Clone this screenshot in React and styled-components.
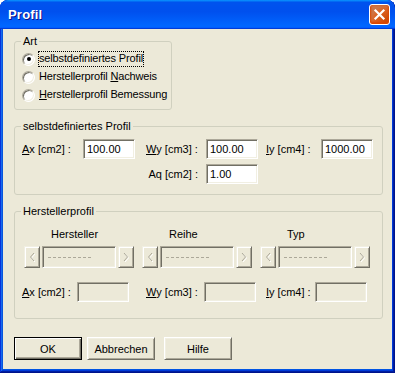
import React from 'react';
import styled, { createGlobalStyle, css } from 'styled-components';

const Global = createGlobalStyle`
  html, body { margin: 0; padding: 0; background: #ffffff; }
  body { font-family: "Liberation Sans", Arial, sans-serif; font-size: 11px; color: #000; }
`;

const Window = styled.div`
  width: 395px;
  height: 373px;
  box-sizing: border-box;
  display: flex;
  flex-direction: column;
  background: #0054e3;
  border-radius: 8px 8px 0 0;
  padding: 0 3px 4px;
  overflow: hidden;
  box-shadow: inset -1px -1px #00138c, inset 1px 1px #0831d9, inset -2px -2px #001ea0,
    inset 2px 2px #166aee, inset -3px -3px #003bda, inset 3px 3px #0855dd;
`;

const TitleBar = styled.div`
  height: 29px;
  margin: 0 -3px;
  flex: none;
  display: flex;
  align-items: center;
  justify-content: space-between;
  padding: 0 5px 0 8px;
  box-sizing: border-box;
  border-radius: 8px 8px 0 0;
  background: linear-gradient(180deg, #0997ff, #0053ee 8%, #0050ee 40%, #0066ff 88%, #0066ff 93%, #005bff 95%, #003dd7 96%, #003dd7);
`;

const Title = styled.span`
  color: #fff;
  font-family: "Liberation Sans", Arial, sans-serif;
  font-weight: bold;
  font-size: 13px;
  text-shadow: 1px 1px #0f1089;
  letter-spacing: 0.2px;
`;

const CloseButton = styled.div`
  width: 21px;
  height: 21px;
  box-sizing: border-box;
  border: 1px solid #fff;
  border-radius: 3px;
  background: radial-gradient(circle at 90% 90%, #cc4600 0%, #dc6527 55%, #cd7546 70%), #d5562a;
  display: flex;
  align-items: center;
  justify-content: center;
  box-shadow: inset 0 -1px 2px 1px #da4600;
`;

const Body = styled.div`
  flex: 1;
  background: #ece9d8;
  padding: 6px 9px 0 11px;
  display: flex;
  flex-direction: column;
  align-items: flex-start;
`;

const Group = styled.fieldset`
  margin: ${(p) => p.$mt || 0}px 0 0;
  padding: 0;
  border: 1px solid #d0d0bf;
  border-radius: 3px;
  min-inline-size: 0;
  box-sizing: border-box;
  width: ${(p) => p.$width}px;
`;

const Legend = styled.legend`
  margin-left: 6px;
  padding: 0 2px;
  line-height: 12px;
  font-size: 11px;
`;

const RadioList = styled.div`
  display: flex;
  flex-direction: column;
  padding: 3px 0 5px 7px;
`;

const RadioRow = styled.div`
  height: 18px;
  display: flex;
  align-items: center;
  gap: 3px;
  white-space: nowrap;
`;

const RadioCircle = styled.span`
  width: 13px;
  height: 13px;
  box-sizing: border-box;
  border-radius: 50%;
  background: #fff;
  border: 1px solid;
  border-color: #aca899 #ffffff #ffffff #aca899;
  box-shadow: inset 1px 1px #716f64, inset -1px -1px #f1efe2;
  position: relative;
  flex: none;
  ${(p) =>
    p.$checked &&
    css`
      &::after {
        content: '';
        position: absolute;
        left: 3.5px;
        top: 3.5px;
        width: 4px;
        height: 4px;
        border-radius: 50%;
        background: #000;
      }
    `}
`;

const RadioLabel = styled.span`
  padding: 1px 1px 2px;
  line-height: 13px;
  white-space: nowrap;
  letter-spacing: -0.15px;
  outline: ${(p) => (p.$focused ? '1px dotted #000' : 'none')};
  outline-offset: -1px;
`;

const FieldGrid = styled.div`
  display: grid;
  grid-template-columns: ${(p) => p.$cols};
  grid-auto-rows: 20px;
  row-gap: 5px;
  align-items: center;
  padding: ${(p) => p.$pad};
`;

const Label = styled.span`
  white-space: nowrap;
  grid-column: ${(p) => p.$col || 'auto'};
  justify-self: ${(p) => (p.$end ? 'end' : 'start')};
  padding-right: ${(p) => (p.$end ? '8px' : '0')};
`;

const sunken = css`
  border: 1px solid;
  border-color: #aca899 #ffffff #ffffff #aca899;
  box-shadow: inset 1px 1px #716f64, inset -1px -1px #f1efe2;
`;

const Edit = styled.div`
  width: 52px;
  height: 20px;
  box-sizing: border-box;
  ${sunken};
  background: ${(p) => (p.$disabled ? '#ece9d8' : '#fff')};
  padding: 3px 0 0 3px;
  line-height: 13px;
  grid-column: ${(p) => p.$col || 'auto'};
`;

const Herst = styled.div`
  padding: 11px 0 16px 7px;
  display: flex;
  flex-direction: column;
`;

const SelectorGrid = styled.div`
  display: grid;
  grid-template-columns: repeat(3, 110px);
  column-gap: 8px;
  row-gap: 5px;
  margin-left: 2px;
`;

const ColumnHead = styled.span`
  height: 13px;
  line-height: 13px;
  padding-left: 27px;
`;

const Selector = styled.div`
  display: flex;
  gap: 2px;
  height: 22px;
`;

const SpinButton = styled.div`
  width: 16px;
  height: 22px;
  box-sizing: border-box;
  background: #ece9d8;
  border: 1px solid;
  border-color: #f1efe2 #716f64 #716f64 #f1efe2;
  box-shadow: inset 1px 1px #ffffff, inset -1px -1px #aca899;
  display: flex;
  align-items: center;
  justify-content: center;
`;

const SelectorField = styled.div`
  flex: 1;
  box-sizing: border-box;
  ${sunken};
  background: #ece9d8;
  display: flex;
  align-items: center;
  padding-left: 5px;
`;

const Dashes = styled.span`
  width: 43px;
  border-top: 1px dashed #aca899;
`;

const Buttons = styled.div`
  display: flex;
  gap: 5px;
  margin-top: 18px;
`;

const PushButton = styled.div`
  width: 68px;
  height: 23px;
  box-sizing: border-box;
  margin-left: ${(p) => p.$ml || 0}px;
  background: #ece9d8;
  display: flex;
  align-items: center;
  justify-content: center;
  font-size: 11px;
  ${(p) =>
    p.$default
      ? css`
          border: 1px solid #000;
          box-shadow: inset 1px 1px #ffffff, inset -1px -1px #716f64, inset -2px -2px #aca899;
        `
      : css`
          border: 1px solid;
          border-color: #ffffff #716f64 #716f64 #ffffff;
          box-shadow: inset 1px 1px #f1efe2, inset -1px -1px #aca899;
        `}
`;

const Chevron = ({ dir }) => (
  <svg width="6" height="10" viewBox="0 0 6 10">
    <path
      d={dir === 'left' ? 'M5 1 L1.5 5 L5 9' : 'M1 1 L4.5 5 L1 9'}
      fill="none"
      stroke="#ffffff"
      strokeWidth="1"
      transform="translate(1 1)"
    />
    <path
      d={dir === 'left' ? 'M5 1 L1.5 5 L5 9' : 'M1 1 L4.5 5 L1 9'}
      fill="none"
      stroke="#aca899"
      strokeWidth="1"
    />
  </svg>
);

const CloseIcon = () => (
  <svg width="13" height="13" viewBox="0 0 13 13">
    <path d="M2.5 2.5 L10.5 10.5 M10.5 2.5 L2.5 10.5" stroke="#fff" strokeWidth="2.2" strokeLinecap="square" />
  </svg>
);

const SelectorCol = () => (
  <Selector>
    <SpinButton>
      <Chevron dir="left" />
    </SpinButton>
    <SelectorField>
      <Dashes />
    </SelectorField>
    <SpinButton>
      <Chevron dir="right" />
    </SpinButton>
  </Selector>
);

export default function App() {
  return (
    <>
      <Global />
      <Window>
        <TitleBar>
          <Title>Profil</Title>
          <CloseButton>
            <CloseIcon />
          </CloseButton>
        </TitleBar>
        <Body>
          <Group $width={158}>
            <Legend>Art</Legend>
            <RadioList>
              <RadioRow>
                <RadioCircle $checked />
                <RadioLabel $focused>selbstdefiniertes Profil</RadioLabel>
              </RadioRow>
              <RadioRow>
                <RadioCircle />
                <RadioLabel>
                  Herstellerprofil <u>N</u>achweis
                </RadioLabel>
              </RadioRow>
              <RadioRow>
                <RadioCircle />
                <RadioLabel>
                  <u>H</u>erstellerprofil Bemessung
                </RadioLabel>
              </RadioRow>
            </RadioList>
          </Group>

          <Group $width={369} $mt={10}>
            <Legend>selbstdefiniertes Profil</Legend>
            <FieldGrid $cols="61px 63px 60px 60px 55px 52px" $pad="7px 0 10px 7px">
              <Label>
                <u>A</u>x [cm2] :
              </Label>
              <Edit>100.00</Edit>
              <Label>
                <u>W</u>y [cm3] :
              </Label>
              <Edit>100.00</Edit>
              <Label>
                <u>I</u>y [cm4] :
              </Label>
              <Edit>1000.00</Edit>
              <Label $col="3" $end>
                Aq [cm2] :
              </Label>
              <Edit $col="4">1.00</Edit>
            </FieldGrid>
          </Group>

          <Group $width={369} $mt={10}>
            <Legend>Herstellerprofil</Legend>
            <Herst>
              <SelectorGrid>
                <ColumnHead>Hersteller</ColumnHead>
                <ColumnHead>Reihe</ColumnHead>
                <ColumnHead>Typ</ColumnHead>
                <SelectorCol />
                <SelectorCol />
                <SelectorCol />
              </SelectorGrid>
              <FieldGrid $cols="55px 69px 58px 62px 49px 52px" $pad="14px 0 0 0">
                <Label>
                  <u>A</u>x [cm2] :
                </Label>
                <Edit $disabled />
                <Label>
                  <u>W</u>y [cm3] :
                </Label>
                <Edit $disabled />
                <Label>
                  <u>I</u>y [cm4] :
                </Label>
                <Edit $disabled />
              </FieldGrid>
            </Herst>
          </Group>

          <Buttons>
            <PushButton $default>OK</PushButton>
            <PushButton>Abbrechen</PushButton>
            <PushButton $ml={4}>Hilfe</PushButton>
          </Buttons>
        </Body>
      </Window>
    </>
  );
}
